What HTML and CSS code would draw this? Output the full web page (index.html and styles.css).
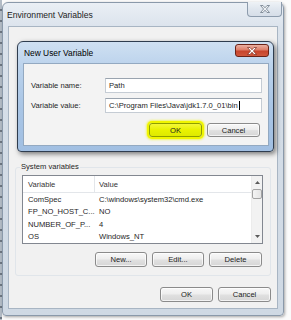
FILE: index.html
```html
<!DOCTYPE html>
<html>
<head>
<meta charset="utf-8">
<link rel="stylesheet" href="styles.css">
</head>
<body>
<div class="stage">
  <div class="bgstrip"></div>
  <div class="window outer">
    <div class="titlebar">
      <span class="title">Environment Variables</span>
      <span class="close inactive">
        <svg width="10" height="8" viewBox="0 0 10 8"><path d="M0.5,0.5 H3 L5,2.8 L7,0.5 H9.5 L6.4,4 L9.5,7.5 H7 L5,5.2 L3,7.5 H0.5 L3.6,4 Z" fill="#eef1f4" stroke="#6f7b89" stroke-width="0.8"/></svg>
      </span>
    </div>
    <div class="client">
      <div class="group user">
        <span class="legend">User variables for Stu</span>
      </div>
      <div class="group system">
        <span class="legend">System variables</span>
        <div class="table">
          <div class="list">
            <div class="row head"><span class="c1">Variable</span><span class="c2">Value</span></div>
            <div class="row"><span class="c1">ComSpec</span><span class="c2">C:\windows\system32\cmd.exe</span></div>
            <div class="row"><span class="c1">FP_NO_HOST_C...</span><span class="c2">NO</span></div>
            <div class="row"><span class="c1">NUMBER_OF_P...</span><span class="c2">4</span></div>
            <div class="row"><span class="c1">OS</span><span class="c2">Windows_NT</span></div>
          </div>
          <div class="scrollbar">
            <span class="arrow"><svg width="5" height="3" viewBox="0 0 5 3"><path d="M0,3 L2.5,0 L5,3 Z" fill="#5a5a5a"/></svg></span>
            <span class="thumb"></span>
            <span class="track"></span>
            <span class="arrow"><svg width="5" height="3" viewBox="0 0 5 3"><path d="M0,0 L2.5,3 L5,0 Z" fill="#5a5a5a"/></svg></span>
          </div>
        </div>
        <div class="btnrow inner">
          <button class="btn">New...</button>
          <button class="btn">Edit...</button>
          <button class="btn wide">Delete</button>
        </div>
      </div>
      <div class="btnrow bottom">
        <button class="btn big">OK</button>
        <button class="btn big">Cancel</button>
      </div>
    </div>
  </div>

  <div class="window dialog">
    <div class="titlebar">
      <span class="title">New User Variable</span>
      <span class="close active">
        <svg width="10" height="8" viewBox="0 0 10 8"><path d="M0.5,0.5 H3 L5,2.8 L7,0.5 H9.5 L6.4,4 L9.5,7.5 H7 L5,5.2 L3,7.5 H0.5 L3.6,4 Z" fill="#ffffff" stroke="#7a2a1e" stroke-width="0.7"/></svg>
      </span>
    </div>
    <div class="client">
      <div class="form">
        <span class="label">Variable name:</span>
        <span class="input">Path</span>
        <span class="label">Variable value:</span>
        <span class="input">C:\Program Files\Java\jdk1.7.0_01\bin<span class="caret"></span></span>
      </div>
      <div class="btnrow dlg">
        <button class="btn big hl">OK</button>
        <button class="btn big">Cancel</button>
      </div>
    </div>
  </div>
</div>
</body>
</html>
```
FILE: styles.css
```css
* { box-sizing: border-box; }
html, body { margin: 0; padding: 0; }
body {
  width: 291px;
  height: 320px;
  overflow: hidden;
  background: #fbfbfb;
  font-family: "Liberation Sans", Arial, sans-serif;
  font-size: 7.6px;
  color: #1e1e1e;
}
.stage {
  position: relative;
  display: flex;
  align-items: flex-start;
  width: 291px;
  height: 320px;
}
.bgstrip {
  width: 2px;
  height: 320px;
  background: repeating-linear-gradient(180deg, #b3bcc6 0, #b3bcc6 9px, #6e7782 9px, #6e7782 11px);
}

/* generic window */
.window {
  display: flex;
  flex-direction: column;
}
.titlebar {
  display: flex;
  justify-content: space-between;
  align-items: flex-start;
}
.close {
  display: flex;
  align-items: center;
  justify-content: center;
}

/* outer (inactive) window */
.outer {
  margin-top: 2px;
  width: 282px;
  height: 314px;
  border: 1px solid #8a99aa;
  border-radius: 6px 6px 4px 4px;
  background: linear-gradient(180deg, #eaeff5 0%, #dbe3ec 8%, #d4dde7 40%, #cfd9e4 100%);
  padding: 0 5px 6px 5px;
  box-shadow: 1px 1px 3px rgba(0, 0, 0, 0.35);
}
.outer .titlebar { height: 23px; }
.outer .title {
  margin-top: 7px;
  margin-left: -1px;
  font-size: 8.6px;
  line-height: 10px;
  color: #222;
}
.close.inactive {
  width: 35px;
  height: 15px;
  margin-top: -1px;
  margin-right: -4px;
  border: 1px solid #8d9cad;
  border-top: none;
  border-radius: 0 0 4px 4px;
  background: linear-gradient(180deg, #eef2f6, #dfe6ee 50%, #d6dee8);
}
.outer .client {
  flex: 1;
  background: #f1f1f1;
  border: 1px solid #a8b5c3;
  padding: 15px 6px 0 6px;
  display: flex;
  flex-direction: column;
}

/* group boxes */
.group {
  position: relative;
  border: 1px solid #e0e5ea;
  border-radius: 3px;
}
.legend {
  position: absolute;
  top: -6px;
  left: 4px;
  padding: 0 1px;
  line-height: 10px;
  background: #f1f1f1;
  color: #1e1e1e;
}
.group.user {
  height: 110px;
  border-color: transparent;
}
.group.user .legend {
  top: -3px;
  left: 10px;
  color: #b4b4b4;
}
.group.system {
  margin-top: 15px;
  height: 109px;
  padding: 7px 7px 8px 6px;
  display: flex;
  flex-direction: column;
}

/* list view */
.table {
  height: 69px;
  border: 1px solid #828790;
  background: #fff;
  display: flex;
  overflow: hidden;
}
.list {
  flex: 1;
  display: flex;
  flex-direction: column;
}
.row {
  display: grid;
  grid-template-columns: 72px 1fr;
  height: 13px;
  align-items: center;
  white-space: nowrap;
  color: #1e1e1e;
}
.row .c1 { padding-left: 5px; }
.row .c2 { padding-left: 4px; }
.row.head {
  height: 18px;
  align-items: stretch;
  border-bottom: 1px solid #e3e6ea;
  color: #333;
}
.row.head span {
  display: flex;
  align-items: center;
}
.row.head .c1 { border-right: 1px solid #e3e6ea; }
.scrollbar {
  width: 11px;
  display: flex;
  flex-direction: column;
  background: #f2f2f2;
  border-left: 1px solid #ececec;
}
.arrow {
  height: 13px;
  display: flex;
  align-items: center;
  justify-content: center;
}
.thumb {
  height: 10px;
  border: 1px solid #a3a3a3;
  border-radius: 2px;
  background: linear-gradient(90deg, #f4f4f4, #e4e4e4);
}
.track { flex: 1; }

/* buttons */
.btnrow {
  display: flex;
  justify-content: flex-end;
  gap: 5px;
}
.btnrow.inner {
  margin-top: 8px;
  margin-right: 1px;
}
.btnrow.bottom {
  margin-top: 11px;
}
.btn {
  width: 52px;
  height: 15px;
  padding: 0;
  border: 1px solid #8b8b8b;
  border-radius: 3px;
  background: linear-gradient(180deg, #f8f8f8 0%, #eeeeee 45%, #e0e0e0 55%, #d6d6d6 100%);
  font: inherit;
  color: #222;
  display: flex;
  align-items: center;
  justify-content: center;
  box-shadow: inset 0 0 0 1px rgba(255, 255, 255, 0.7);
}
.btn.wide { width: 53px; }
.btn.big { width: 53px; }

/* dialog (active) */
.dialog {
  position: absolute;
  left: 17px;
  top: 41px;
  width: 257px;
  height: 111px;
  border: 1px solid #2f3d4f;
  border-radius: 6px 6px 4px 4px;
  background: linear-gradient(180deg, #cfe0f2 0%, #b9d1eb 25%, #a9c5e5 60%, #a1bfe2 100%);
  padding: 0 4px 5px 5px;
  box-shadow: 2px 2px 5px rgba(0, 0, 0, 0.5);
}
.dialog .titlebar { height: 21px; }
.dialog .title {
  margin-top: 6px;
  margin-left: 1px;
  font-size: 8.4px;
  line-height: 10px;
  color: #000;
}
.close.active {
  width: 34px;
  height: 13px;
  margin-top: 2px;
  border: 1px solid #6a2217;
  border-radius: 3px;
  background: linear-gradient(180deg, #eab0a2 0%, #dd7d68 45%, #c7442c 55%, #d0573c 100%);
}
.dialog .client {
  flex: 1;
  background: #f3f3f3;
  border: 1px solid #93a9c1;
  padding: 14px 6px 0 7px;
  display: flex;
  flex-direction: column;
}
.form {
  display: grid;
  grid-template-columns: 74px 157px;
  grid-auto-rows: 15px;
  row-gap: 5px;
  align-items: center;
}
.label { color: #1e1e1e; }
.input {
  height: 15px;
  display: flex;
  align-items: center;
  padding-left: 3px;
  background: #fff;
  border: 1px solid #c5ccd4;
  border-top-color: #9aa4af;
  white-space: nowrap;
  overflow: hidden;
  color: #1e1e1e;
}
.caret {
  display: inline-block;
  width: 1px;
  height: 9px;
  margin-left: 1px;
  background: #000;
}
.btnrow.dlg {
  margin-top: 10px;
  margin-right: 2px;
}
.btn.hl {
  height: 14px;
  border-color: #8f9e00;
  background: linear-gradient(180deg, #f4f83a 0%, #e9f200 50%, #dfe900 100%);
  box-shadow: 0 0 0 2px #f0f500, 0 0 2px 3px rgba(240, 245, 0, 0.6);
}
.btnrow.dlg .btn { height: 14px; }
```
